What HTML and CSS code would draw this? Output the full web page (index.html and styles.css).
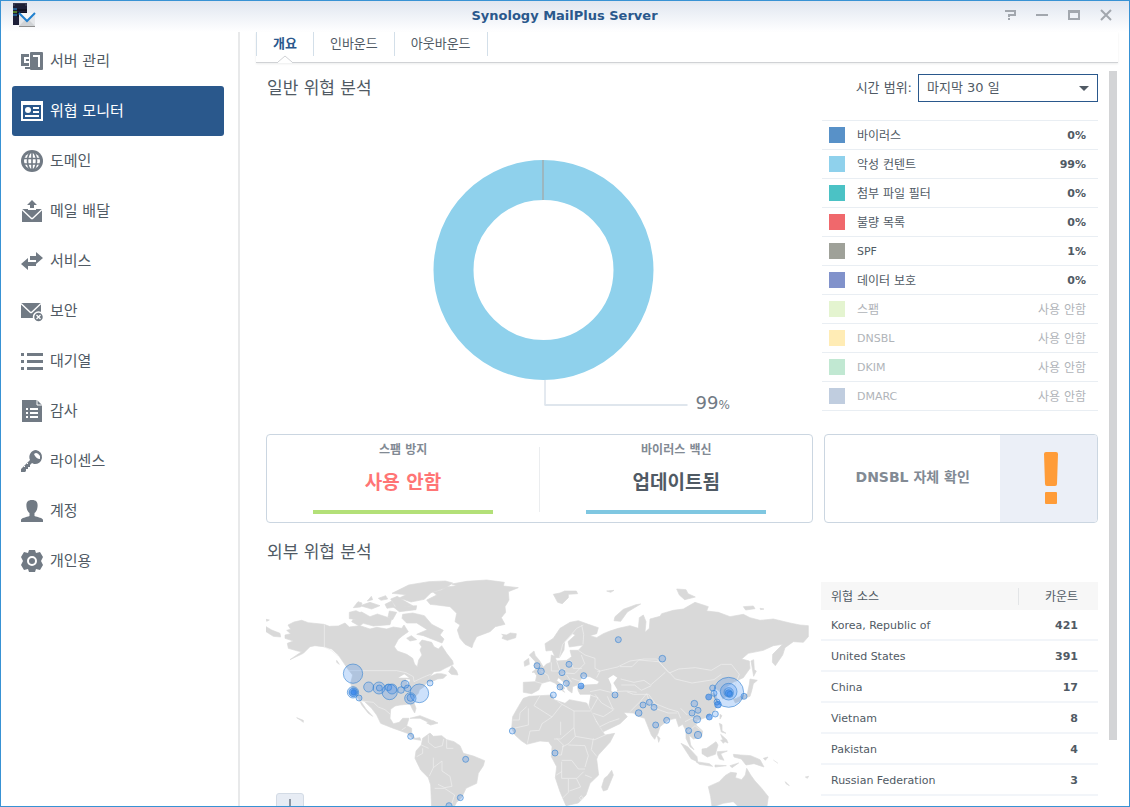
FILE: index.html
```
<!DOCTYPE html>
<html lang="ko">

<head>
    <meta charset="UTF-8">
    <meta name="viewport" content="width=device-width, initial-scale=1.0">
    <title>Synology MailPlus Server</title>
    <link rel="stylesheet" href="styles.css">
</head>

<body>
    <div class="window">
        <header class="titlebar">
            <svg class="app-icon" width="24" height="26" viewBox="0 0 24 26">
                <path d="M1 1h14v22H1z" fill="#1d1f38" />
                <path d="M1 1h14v3H1z" fill="#343750" />
                <path d="M3 3h10" stroke="#090a18" stroke-width="1" />
                <path d="M5 8h10M5 11h10M5 14h5" stroke="#05060f" stroke-width="1" />
                <path d="M1 7h4M1 13h4" stroke="#2d9be8" stroke-width="1" />
                <path d="M1 10h4" stroke="#8de01c" stroke-width="1" />
                <path d="M7 11h16v13H7z" fill="#e4e6e9" />
                <path d="M7 24l6-6h4l6 6z" fill="#d0d3d6" />
                <path d="M7 24.500h16" stroke="#8f8f8f" />
                <path d="M7 11l8 8 8-8" fill="#f7f8f9" stroke="#2181cf" stroke-width="2" />
            </svg>
            <h1>Synology MailPlus Server</h1>
            <div class="window-buttons">
                <button aria-label="도움말"><svg width="12" height="12" viewBox="0 0 12 12"><path d="M1 2h10v4H5v2M5 9v2" /></svg></button>
                <button aria-label="최소화"><svg width="12" height="12" viewBox="0 0 12 12"><path d="M0 6h12" /></svg></button>
                <button aria-label="최대화"><svg width="12" height="12" viewBox="0 0 12 12"><path d="M1 2v8h10V2" /><path d="M0 2.500h12" stroke-width="3" /></svg></button>
                <button aria-label="닫기"><svg width="12" height="12" viewBox="0 0 12 12"><path d="M1 1l10 10M11 1L1 11" /></svg></button>
            </div>
        </header>

        <div class="body">
            <nav class="sidebar">
                <a href="#server">
                    <svg viewBox="0 0 22 22"><path d="M8 5.500H1.500v9H8" fill="none" stroke="currentColor" stroke-width="3" /><path d="M5 9h3v2H5zM4 17h5v2H4z" /><path d="M10 2h11a1 1 0 0 1 1 1v16a1 1 0 0 1-1 1H10a1 1 0 0 1-1-1V3a1 1 0 0 1 1-1z" /><path d="M12 6h6v11" fill="none" stroke="#fff" stroke-width="2" /></svg>
                    서버 관리
                </a>
                <a href="#threat" class="active">
                    <svg viewBox="0 0 22 22"><path fill-rule="evenodd" d="M0 1h22v20H0zM2 5v14h18V5z" /><circle cx="7" cy="10" r="3" /><path d="M12 7h6v2h-6zM12 11h6v2h-6zM4 15h14v2H4z" /></svg>
                    위협 모니터
                </a>
                <a href="#domain">
                    <svg viewBox="0 0 22 22"><circle cx="11" cy="11" r="11" /><circle cx="11" cy="11" r="8" fill="#fff" /><path d="M11 2v18M2 8.500h18M2 14h18" fill="none" stroke="currentColor" stroke-width="1.600" /><ellipse cx="11" cy="11" rx="4.500" ry="9" fill="none" stroke="currentColor" stroke-width="1.600" /></svg>
                    도메인
                </a>
                <a href="#delivery">
                    <svg viewBox="0 0 22 22"><path d="M1 9h6v1h8V9h6v13H1z" /><path d="M1 9.500l9.500 9h1l9.500-9" fill="none" stroke="#fff" stroke-width="1.300" /><path d="M11 0l5 5h-3v3H9V5H6z" /></svg>
                    메일 배달
                </a>
                <a href="#service">
                    <svg viewBox="0 0 22 22"><path d="M9 6h6V2l7 6-7 6v-4H9z" /><path d="M15 12H7V8l-7 6 7 6v-4h8z" /></svg>
                    서비스
                </a>
                <a href="#security">
                    <svg viewBox="0 0 22 22"><path d="M0 3h20v15H0z" /><path d="M0 3.500l9.500 9h1l9.500-9" fill="none" stroke="#fff" stroke-width="1.300" /><circle cx="17.500" cy="17" r="5" stroke="#fff" stroke-width="1.500" /><path d="M15.500 15l4 4M19.500 15l-4 4" stroke="#fff" stroke-width="1.300" /></svg>
                    보안
                </a>
                <a href="#queue">
                    <svg viewBox="0 0 22 22"><path d="M0 3h3v3H0zM6 3h16v3H6zM0 10h3v3H0zM6 10h16v3H6zM0 17h3v3H0zM6 17h16v3H6z" /></svg>
                    대기열
                </a>
                <a href="#audit">
                    <svg viewBox="0 0 22 22"><path d="M1 0h15l5 5v17H1z" /><path d="M16 0v5h5" fill="none" stroke="#fff" /><path d="M5 9h2M9 9h8M5 13h2M9 13h8M5 17h2M9 17h8" stroke="#fff" stroke-width="2" /></svg>
                    감사
                </a>
                <a href="#license">
                    <svg viewBox="0 0 22 22"><path d="M15 0a7 7 0 1 1-2 14l-2-1-2 2v2H7v2H5v2l-1 1H0v-3L9 10A7 7 0 0 1 15 0z" /><path d="M13 4q3-3 6 2v3q-4 0-6-5z" fill="#fff" /><path d="M3 16l1 1M6 13l1 1" fill="none" stroke="#fff" /></svg>
                    라이센스
                </a>
                <a href="#account">
                    <svg viewBox="0 0 22 22"><path d="M11 0c5 0 6 3 5.500 7-.300 3-1.500 5-3 6v3c3 1 8.500 2 8.500 4v2H0v-2c0-2 5.500-3 8.500-4v-3c-1.500-1-2.700-3-3-6C5 3 6 0 11 0z" /></svg>
                    계정
                </a>
                <a href="#personal">
                    <svg viewBox="0 0 22 22"><path d="M8 0h6l1 3 4-1 3 5-2 4 2 4-3 5-4-1-1 3H8l-1-3-4 1-3-5 2-4-2-4 3-5 4 1z" /><circle cx="11" cy="11" r="4" fill="none" stroke="#fff" stroke-width="2" /></svg>
                    개인용
                </a>
            </nav>

            <main class="main">
                <div class="tabs">
                    <button class="tab selected">개요</button>
                    <button class="tab">인바운드</button>
                    <button class="tab">아웃바운드</button>
                    <svg class="tab-caret" width="14" height="8" viewBox="0 0 14 8"><path d="M0 7l7-6 7 6v1H0z" fill="#fff" /><path d="M0 7l7-6 7 6" fill="none" stroke="#d0d2d5" /></svg>
                </div>

                <div class="panel">
                    <div class="content">
                        <div class="section-head">
                            <h2>일반 위협 분석</h2>
                            <label for="range">시간 범위:</label>
                            <span class="select-box">
                                <select id="range">
                                    <option>마지막 30 일</option>
                                    <option>마지막 7 일</option>
                                </select>
                            </span>
                        </div>

                        <div class="overview">
                            <svg class="donut" viewBox="0 0 555 291">
                                <circle cx="277" cy="150" r="90" fill="none" stroke="#8fd1ec" stroke-width="40" />
                                <path d="M276.500 40v40" stroke="#a89d94" />
                                <path d="M278.500 260v25" stroke="#c9d4e1" fill="none" />
                                <path d="M278 285h143" stroke="#dfe6ed" stroke-width="2" />
                                <text x="429" y="289" class="donut-value">99<tspan class="donut-unit">%</tspan></text>
                            </svg>
                            <ul class="legend">
                                <li><i class="virus"></i><span>바이러스</span><b>0%</b></li>
                                <li><i class="content-bad"></i><span>악성 컨텐트</span><b>99%</b></li>
                                <li><i class="attach"></i><span>첨부 파일 필터</span><b>0%</b></li>
                                <li><i class="blacklist"></i><span>불량 목록</span><b>0%</b></li>
                                <li><i class="spf"></i><span class="latin">SPF</span><b>1%</b></li>
                                <li><i class="data"></i><span>데이터 보호</span><b>0%</b></li>
                                <li class="off"><i class="spam"></i><span>스팸</span><em>사용 안함</em></li>
                                <li class="off"><i class="dnsbl"></i><span class="latin">DNSBL</span><em>사용 안함</em></li>
                                <li class="off"><i class="dkim"></i><span class="latin">DKIM</span><em>사용 안함</em></li>
                                <li class="off"><i class="dmarc"></i><span class="latin">DMARC</span><em>사용 안함</em></li>
                            </ul>
                        </div>

                        <div class="cards">
                            <div class="card engines">
                                <div class="engine spam-engine">
                                    <h3>스팸 방지</h3>
                                    <p>사용 안함</p>
                                </div>
                                <div class="engine virus-engine">
                                    <h3>바이러스 백신</h3>
                                    <p>업데이트됨</p>
                                </div>
                            </div>
                            <div class="card check">
                                <h3>DNSBL 자체 확인</h3>
                                <div class="warn">
                                    <svg width="16" height="54" viewBox="0 0 16 54"><path d="M1 2q0-2 2-2h10q2 0 2 2l-1 30q0 2-2 2H4q-2 0-2-2z" /><rect x="2" y="40" width="12" height="12" rx="1" /></svg>
                                </div>
                            </div>
                        </div>

                        <h2 class="map-title">외부 위협 분석</h2>

                        <div class="sources">
                            <div class="map">
                                <svg viewBox="18 0 1629 696">
                                    <g class="land">
                                        <!-- North America -->
                                        <path d="M75 180L92 176 80 166 92 163 84 150 102 141 125 136 145 143 192 148 208 154 235 153 255 144 268 156 300 152 330 162 350 157 380 162 400 156 425 160 432 150 445 170 428 182 415 193 403 215 412 228 440 238 458 250 464 268 472 275 476 255 486 240 480 225 485 215 478 205 486 195 515 202 522 215 535 222 545 212 560 235 578 258 580 268 555 280 540 288 522 290 508 305 530 296 545 296 560 300 550 310 532 312 520 318 500 322 492 335 478 345 475 355 458 372 468 400 464 414 456 400 450 387 420 390 405 393 392 403 390 430 400 446 418 442 428 430 447 430 440 452 455 460 455 478 465 490 480 488 482 496 460 492 442 475 420 467 395 458 362 445 350 420 335 400 312 378 300 375 318 402 338 424 325 415 305 390 296 372 280 352 272 325 278 300 262 280 250 262 235 240 215 222 190 215 165 212 150 215 130 235 90 254 125 230 113 228 85 220 82 205 100 198 75 190z" />
                                        <path d="M18 155L35 165 60 175 62 186 40 184 18 170zM18 133l10 2-8 4zM230 256l8 12-8-6zM268 112l20-5 17 8-15 18-22-2zM275 140l15-25 15-4 25 14 22-8 43 14-5 18-50 4-30-8-12 8zM280 98l14-18 12 4-4 12zM322 78l12-14 4 10zM300 92l30-10 30 10-25 10zM355 70l22-8 6 10-20 4zM375 88l20-10 10 18-24 4zM400 96l70-4-2 12-50 6zM388 108l22 4-12 22-14-8zM396 55l50-25 60-10 50-2 22 6-20 14-45 15-20 20-40 8-35-12 20-10zM392 72l20-8 22 14 24 14-50 4z" />
                                        <path d="M428 118l30-4 35 8 22 26 35 18-10 14 12 12-6 12-56-22-20-4 32-14-32-20-30 0-14-14zM440 190l14-8 16 12-20 4zM450 430l30-8 45 18-20 2-25-12zM500 444l20-6 14 6-22 6zM110 428l20 8 0 6-8-6zM566 290l10-18 14 16 4 12-20-2z" />
                                        <!-- Greenland and the North Atlantic -->
                                        <path d="M500 75L530 60 520 52 545 45 560 36 590 32 575 27 620 19 680 15 733 22 730 33 775 38 745 50 747 75 735 95 737 112 724 128 735 148 706 155 690 170 650 185 640 205 636 218 615 208 600 190 592 165 600 150 585 140 590 115 570 95 530 90 510 88z" />
                                        <path d="M725 178l14 2 12-6 18 2-2 12-25 8-16-6 4-8zM880 58l20-4 14-6 35 0 4 8-28 2 0 10-18 18-14-4zM1040 48l22-2-10 6zM1065 125l25-22 38-14 14-2-40 24-20 28-20-2zM1250 42l28 2 6 12 22 10-32 8-16-14zM1450 95l30-2 5 8-28 4zM1500 100l12 2-10 2z" />
                                        <!-- South America -->
                                        <path d="M465 550L468 528 484 510 488 490 510 474 520 484 545 482 560 494 582 500 600 512 610 535 640 543 674 557 670 572 655 595 650 625 618 640 605 668 590 682 580 700H515L512 630 505 608 482 585z" />
                                        <!-- Europe and Asia -->
                                        <path d="M790 322L826 320 830 302 822 290 842 287 858 268 872 262 874 240 884 244 890 258 920 256 935 245 930 226 955 226 970 210 928 216 924 200 946 180 938 176 914 200 912 225 898 248 886 248 876 226 858 228 855 206 880 190 900 160 930 142 955 137 985 148 1015 158 1010 176 990 182 1010 188 1030 176 1050 168 1075 160 1110 152 1135 160 1138 128 1150 120 1158 140 1155 172 1168 160 1170 132 1200 124 1205 116 1240 106 1270 102 1305 82 1345 95 1340 108 1375 112 1410 125 1450 118 1470 128 1500 136 1540 132 1590 144 1620 150 1645 152 1645 185 1630 202 1600 200 1575 218 1568 240 1546 272 1537 262 1538 238 1568 208 1540 212 1510 226 1465 235 1445 252 1468 258 1470 280 1450 308 1420 322 1396 338 1398 365 1388 372 1380 350 1366 340 1352 352 1368 360 1375 385 1366 405 1345 425 1312 436 1308 450 1328 468 1325 485 1300 492 1287 480 1292 510 1302 524 1290 515 1278 490 1278 468 1268 448 1256 455 1248 430 1225 435 1200 455 1194 475 1184 493 1174 480 1160 445 1154 430 1135 424 1120 414 1080 412 1060 400 1050 390 1060 403 1085 405 1102 425 1080 446 1030 470 1020 455 995 410 987 390 993 358 960 358 955 348 952 336 975 330 1012 328 1018 320 990 305 968 304 960 318 952 330 938 335 936 354 924 345 915 325 896 308 890 316 915 340 908 344 914 352 900 342 886 325 870 318 845 325 836 345 815 356 790 352z" />
                                        <path d="M808 240l14-12 4 14 12 14 12 20 8 12-16 4-26 0 12-10-6-10 4-12zM792 260l14-10 2 18-14 6zM1473 258l8-4 2 30 6 4-8 16zM1470 312l22 4-12 10-4 18-6 20-32 12-6-8 30-12 6-28zM1420 372l14-2 6 8-14 6zM1380 418l6 4-6 10zM1192 482l8 8-4 12zM1378 445l8 4 0 18 12 8-14-4zM1382 478l18 16 4 10-14-6zM1382 495l18 0-10 10z" />
                                        <!-- Africa -->
                                        <path d="M790 370L808 364 840 362 876 360 882 374 915 385 928 374 980 384 990 402 1008 440 1028 470 1035 480 1064 475 1050 502 1015 540 1010 552 1016 600 990 625 978 660 955 684 918 692 900 650 886 608 890 575 874 545 876 515 866 500 840 498 800 508 785 498 765 480 755 460 758 425 775 395zM1055 586l5 14-18 44-12 4-5-12 8-26 10-8z" />
                                        <!-- South-east Asia and Oceania -->
                                        <path d="M1263 505l20 10 28 30 2 16-20-10zM1308 560l40 6 10 8-40-6zM1326 522l14-2 28-20 6 10-8 28-24 8-16-10zM1372 530l30-2-20 8 10 20-14-4-6-14zM1365 570l34 2-34 4zM1410 572l26-8-20 14zM1420 538l22 2 30 2 28 12 12 22-30-10-24 4-14-18-22-6zM1510 550l14-4-8 10zM1540 555l14 10M1576 620l12 12-10-6zM1636 606l10-2-4 6z" />
                                        <path d="M1345 635L1378 620 1395 602 1412 592 1430 594 1426 608 1445 614 1456 600 1460 580 1472 600 1485 618 1505 640 1525 665 1520 700H1440L1420 680 1390 685 1356 696 1352 665z" />
                                    </g>
                                    <g class="water">
                                        <path d="M1045 310l15-10 12 8-12 16 12 20-6 12-12-8 0-18z" />
                                        <path d="M948 332l4 6-8 2zM415 308l18-10 14 10zM438 312l6 20 6-18z" />
                                    </g>
                                    <g class="borders">
                                        <path d="M193 148V216l20 10 22 18M265 287H410l28 6 22 12 2 15 32-15 20-8M300 378l40 4 15 14 20 8 16 14M425 465l12-8M505 480l0 22 20 16 22-6 4-20M484 510l22 10M470 545l18-10 0-15M520 548v30l-12 25M520 578l26-20 0 30 24 16 6 30-22 4-20-10M524 640l30 0 30 20-10 30M560 494v26l20 0" />
                                        <path d="M826 320l22 6M842 287l22 14 4 14M874 262l0 26 20 0 22-4M894 300l22-6 28 2 30-30-10-26M890 258l10 30M932 256l8 24 26 0M898 248l10-40 30-34 12-14 20-10M965 150l6 28-2 30M955 226l20 14 30 10 0 30 15 8-10 20M920 300l15 22M935 310l30 10M990 350l30-6 32 8M1005 358l20 26 35 20M990 360l24 8-20 36M1000 415l30 10 30-20M1020 455l28-14 30-10M1060 350l40-2 30 4M1058 400l-16-36" />
                                        <path d="M1012 290l60-14 38-18 42-6 38 0 34 38M1080 275l36 0 20-20 60 5 32 34 28-12 50-4 48 8 30-18 30 0 24 30-14 36M1226 290l20 22 50 12 66-10 22-16M1082 312l40 10 30-6 20 14 44-38M1084 330l40 0 20 16 30-14M1100 350l20 8 46 0 20 28 40 16 28 8 8 20M1110 410l30-30 20-24M1160 356l14 40 50 18 28 0M1262 400l20 20M1275 440l20-10 20 6M1285 470l20-18 22 18" />
                                        <path d="M800 395l-20 18-2 22-20 0M840 362l-18 30 54 34 30-38-14-10M805 400v50l-44 10M876 426l-30 20-8 20-28 2-8 38M906 388l36 20v50l-40 34-20 0M942 408h50M942 458l4 26 58 10 36-16M902 440v40M890 490l20 20-6 30-20 0M946 484l-20 22-20 10M1000 490l-6 34 16 20M925 510l50 2 10 30-10 34M905 556h30l20 26 20 0M905 590l-16 10M905 560v50l46 0 20-20M925 612v40l-18 18M950 612l12 24-34 12M975 600l20 8M958 668l6-6 6 8-8 4z" />
                                    </g>
                                    <g class="bubbles">
                                        <circle cx="279" cy="296" r="29" />
                                        <circle cx="279" cy="352" r="17" /><circle class="hot" cx="280" cy="352" r="13" /><circle class="hot" cx="281" cy="352" r="8" />
                                        <circle cx="297" cy="369" r="9" />
                                        <circle cx="326" cy="336" r="15" />
                                        <circle cx="357" cy="339" r="18" /><circle cx="358" cy="339" r="9" />
                                        <circle cx="385" cy="337" r="10" />
                                        <circle cx="389" cy="351" r="23" /><circle cx="396" cy="342" r="15" />
                                        <circle cx="423" cy="345" r="10" />
                                        <circle cx="435" cy="328" r="12" /><circle cx="443" cy="340" r="10" />
                                        <circle cx="478" cy="355" r="28" />
                                        <circle cx="451" cy="370" r="17" /><circle cx="452" cy="368" r="11" />
                                        <circle cx="510" cy="324" r="9" />
                                        <circle cx="452" cy="484" r="9" />
                                        <circle cx="617" cy="553" r="9" />
                                        <circle cx="601" cy="668" r="9" />
                                        <circle cx="567" cy="692" r="9" />
                                        <circle cx="831" cy="272" r="9" />
                                        <circle cx="843" cy="289" r="10" />
                                        <circle cx="927" cy="268" r="9" />
                                        <circle cx="906" cy="293" r="9" />
                                        <circle cx="971" cy="302" r="9" />
                                        <circle class="hot" cx="963" cy="333" r="9" />
                                        <circle cx="919" cy="325" r="9" />
                                        <circle cx="900" cy="336" r="9" />
                                        <circle cx="880" cy="360" r="9" />
                                        <circle cx="757" cy="468" r="9" />
                                        <circle cx="885" cy="534" r="9" />
                                        <circle cx="1075" cy="194" r="9" />
                                        <circle cx="1065" cy="360" r="9" />
                                        <circle cx="1207" cy="251" r="10" />
                                        <circle cx="1149" cy="390" r="9" />
                                        <circle cx="1168" cy="382" r="9" />
                                        <circle cx="1182" cy="397" r="9" />
                                        <circle cx="1136" cy="414" r="10" />
                                        <circle cx="1187" cy="450" r="9" />
                                        <circle cx="1220" cy="436" r="9" />
                                        <circle cx="1303" cy="386" r="10" />
                                        <circle cx="1296" cy="414" r="9" />
                                        <circle cx="1314" cy="406" r="9" />
                                        <circle cx="1311" cy="433" r="11" />
                                        <circle cx="1286" cy="467" r="9" />
                                        <circle cx="1314" cy="480" r="11" />
                                        <circle class="hot" cx="1348" cy="426" r="9" />
                                        <circle cx="1366" cy="417" r="9" />
                                        <circle class="hot" cx="1346" cy="366" r="9" />
                                        <circle cx="1358" cy="339" r="9" />
                                        <circle cx="1362" cy="355" r="9" />
                                        <circle cx="1371" cy="381" r="9" /><circle class="hot" cx="1374" cy="389" r="10" />
                                        <circle cx="1452" cy="364" r="9" />
                                        <circle cx="1406" cy="352" r="45" /><circle cx="1406" cy="350" r="25" />
                                        <circle cx="1406" cy="352" r="14" /><circle class="hot" cx="1406" cy="354" r="10" /><circle cx="1410" cy="358" r="9" />
                                    </g>
                                </svg>
                                <button class="zoom-in" aria-label="확대"><svg width="16" height="16" viewBox="0 0 16 16"><path d="M8 0v16M0 8h16" /></svg></button>
                            </div>

                            <table>
                                <thead>
                                    <tr><th>위협 소스</th><th>카운트</th></tr>
                                </thead>
                                <tbody>
                                    <tr><td>Korea, Republic of</td><td>421</td></tr>
                                    <tr><td>United States</td><td>391</td></tr>
                                    <tr><td>China</td><td>17</td></tr>
                                    <tr><td>Vietnam</td><td>8</td></tr>
                                    <tr><td>Pakistan</td><td>4</td></tr>
                                    <tr><td>Russian Federation</td><td>3</td></tr>
                                </tbody>
                            </table>
                        </div>
                    </div>
                    <div class="scrollbar"></div>
                </div>
            </main>
        </div>
    </div>
</body>

</html>
```
FILE: styles.css
```
/* Global Styles */
* {
    box-sizing: border-box;
    margin: 0;
    padding: 0;
}

body {
    font-family: "DejaVu Sans", "Noto Sans CJK KR", sans-serif;
    font-size: 12px;
    color: #505a64;
    background: #fff;
}

button {
    border: none;
    background: none;
    font: inherit;
    color: inherit;
    cursor: pointer;
}

/* Window */
.window {
    display: flex;
    flex-direction: column;
    height: 100vh;
    overflow: hidden;
    border: 1px solid #3892d4;
}

.titlebar {
    display: grid;
    grid-template-columns: 1fr auto 1fr;
    align-items: center;
    flex: none;
    height: 31px;
    padding: 0 17px 0 11px;
    background: linear-gradient(#e0e6f0, #fff);
}

.app-icon {
    margin-bottom: 3px;
}

.titlebar h1 {
    font-size: 13px;
    line-height: 28px;
    color: #2a588c;
    padding: 0 0 2px 5px;
}

.window-buttons {
    display: flex;
    justify-content: flex-end;
    gap: 20px;
    padding-bottom: 4px;
}

.window-buttons button {
    width: 12px;
    height: 12px;
}

.window-buttons svg {
    display: block;
    fill: none;
    stroke: #a2a7ae;
    stroke-width: 2;
}

.body {
    display: flex;
    flex: 1;
    min-height: 0;
}

/* Sidebar */
.sidebar {
    flex: none;
    width: 239px;
    padding: 4px 14px 0 11px;
    border-right: 2px solid #e8e9ea;
}

.sidebar a {
    display: flex;
    align-items: center;
    gap: 7px;
    height: 50px;
    padding: 0 0 3px 9px;
    border-radius: 3px;
    font-size: 15px;
    color: #505a64;
    text-decoration: none;
}

.sidebar svg {
    width: 22px;
    height: 22px;
    margin-top: 3px;
    fill: currentColor;
    color: #717a84;
}

.sidebar a.active,
.sidebar a.active svg {
    color: #fff;
}

.sidebar a.active {
    background: #2a588c;
}

/* Tabs */
.main {
    display: flex;
    flex-direction: column;
    flex: 1;
    min-width: 0;
    padding: 0 11px 0 16px;
}

.tabs {
    position: relative;
    display: flex;
    flex: none;
    height: 31px;
    border-bottom: 1px solid #d0d2d5;
    box-shadow: 0 1px 2px #eceded;
}

.tab {
    height: 24px;
    padding: 0 16px;
    border-right: 1px solid #d3dfe9;
    font-size: 13px;
    line-height: 20px;
}

.tab:first-child {
    border-left: 1px solid #d3dfe9;
}

.tab.selected {
    font-weight: bold;
    color: #2a588c;
}

.tab-caret {
    position: absolute;
    left: 22px;
    top: 23px;
}

.panel {
    display: flex;
    flex: 1;
    gap: 11px;
    min-height: 0;
    padding: 0 1px 0 10px;
    overflow: hidden;
}

.content {
    flex: 1;
    min-width: 0;
}

.scrollbar {
    flex: none;
    width: 8px;
    height: 90%;
    margin-top: 8px;
    background: #d3d4d6;
}

/* General threat analysis */
h2 {
    padding-left: 1px;
    font-size: 17px;
    font-weight: normal;
    line-height: 28px;
}

.section-head {
    display: flex;
    align-items: center;
    padding-top: 11px;
}

.section-head h2 {
    flex: 1;
}

.section-head label {
    margin-right: 6px;
    padding-bottom: 3px;
    font-size: 13px;
}

.select-box {
    position: relative;
    width: 180px;
}

.select-box::after {
    content: "";
    position: absolute;
    right: 9px;
    top: 12px;
    border: 5px solid transparent;
    border-top-color: #505a64;
    pointer-events: none;
}

.select-box select {
    display: block;
    width: 100%;
    height: 28px;
    padding: 0 24px 2px 8px;
    appearance: none;
    border: 1px solid #2a588c;
    border-radius: 0;
    background: #fff;
    color: #505a64;
    font: inherit;
    font-size: 13px;
}

.overview {
    display: grid;
    grid-template-columns: 1fr 276px;
    margin-top: 18px;
}

.donut {
    width: 100%;
    height: 291px;
    overflow: visible;
}

.donut-value {
    font-size: 18px;
    fill: #717a84;
}

.donut-unit {
    font-size: 12px;
}

.legend {
    list-style: none;
    border-top: 1px solid #e9eef3;
}

.legend li {
    display: flex;
    align-items: center;
    height: 29px;
    padding: 0 12px 0 7px;
    border-bottom: 1px solid #e9eef3;
}

.legend i {
    width: 16px;
    height: 16px;
    margin-right: 12px;
}

.legend span,
.legend em {
    padding-bottom: 2px;
}

.legend b,
.legend em {
    margin-left: auto;
    font-style: normal;
}

.legend b,
.legend .latin {
    padding-bottom: 0;
    font-size: 11px;
}

.legend .off {
    color: #b0b4b9;
}

.virus { background: #5891c8; }
.content-bad { background: #8fd1ec; }
.attach { background: #4bc2c5; }
.blacklist { background: #f0686c; }
.spf { background: #9fa199; }
.data { background: #8192cb; }
.spam { background: #e4f4d0; }
.dnsbl { background: #ffecb5; }
.dkim { background: #c1e8d2; }
.dmarc { background: #c0cddf; }

/* Status cards */
.cards {
    display: grid;
    grid-template-columns: 2fr 1fr;
    gap: 11px;
    margin-top: 23px;
}

.card {
    display: flex;
    height: 89px;
    border: 1px solid #cbd6e1;
    border-radius: 4px;
    overflow: hidden;
}

.card h3 {
    color: #828a94;
}

.engines {
    padding: 12px 0 10px;
}

.engine {
    display: flex;
    flex-direction: column;
    align-items: center;
    flex: 1;
}

.engine + .engine {
    border-left: 1px solid #ebedef;
}

.engine h3 {
    margin-top: -7px;
    font-size: 12px;
    line-height: 20px;
}

.engine p {
    width: 180px;
    margin-top: 4px;
    padding-bottom: 10px;
    border-bottom: 4px solid #b3e078;
    font-size: 19px;
    font-weight: bold;
    line-height: 36px;
    text-align: center;
}

.spam-engine p {
    color: #ff7575;
}

.virus-engine p {
    border-color: #7fc7e1;
}

.check {
    align-items: center;
}

.check h3 {
    flex: 1;
    padding-bottom: 6px;
    font-size: 14px;
    text-align: center;
}

.warn {
    display: flex;
    align-items: center;
    justify-content: center;
    align-self: stretch;
    width: 97px;
    background: #ebeff7;
}

.warn svg {
    margin-right: -6px;
    fill: #ff9c38;
}

/* External threat analysis */
.map-title {
    margin-top: 15px;
}

.sources {
    display: grid;
    grid-template-columns: 1fr 277px;
    gap: 12px;
    align-items: start;
    margin-top: 9px;
}

.map {
    position: relative;
}

.map > svg {
    display: block;
    width: 100%;
}

.land {
    fill: #d9d9d9;
    stroke: #d9d9d9;
    stroke-width: 2;
    stroke-linejoin: round;
}

.water {
    fill: #fff;
}

.borders {
    fill: none;
    stroke: #f0f0f0;
    stroke-width: 2;
    stroke-linejoin: round;
}

.bubbles {
    fill: rgba(47, 128, 237, .24);
    stroke: rgba(52, 130, 210, .6);
    stroke-width: 3;
}

.hot {
    fill: rgba(47, 128, 237, .6);
}

.zoom-in {
    position: absolute;
    left: 10px;
    top: 218px;
    width: 28px;
    height: 28px;
    border: 1px solid #d3dbe5;
    border-radius: 3px;
    background: #e7ecf4;
}

.zoom-in svg {
    display: block;
    margin: 0 auto;
    stroke: #8b94a0;
    stroke-width: 2;
}

table {
    width: 100%;
    margin-top: 7px;
    border-collapse: separate;
    border-spacing: 0;
    font-size: 11px;
}

th {
    height: 28px;
    padding: 0 10px 2px;
    background: #f7f7f7;
    font-size: 12px;
    font-weight: normal;
    text-align: left;
}

td {
    height: 31px;
    padding: 2px 10px 0;
    border-bottom: 2px solid #f2f5f9;
}

th:last-child,
td:last-child {
    width: 80px;
    padding-right: 20px;
    text-align: right;
}

th:last-child {
    background: linear-gradient(#e3e5e7, #e3e5e7) 0 6px / 1px 17px no-repeat #f7f7f7;
}

td:last-child {
    font-weight: bold;
}
```
